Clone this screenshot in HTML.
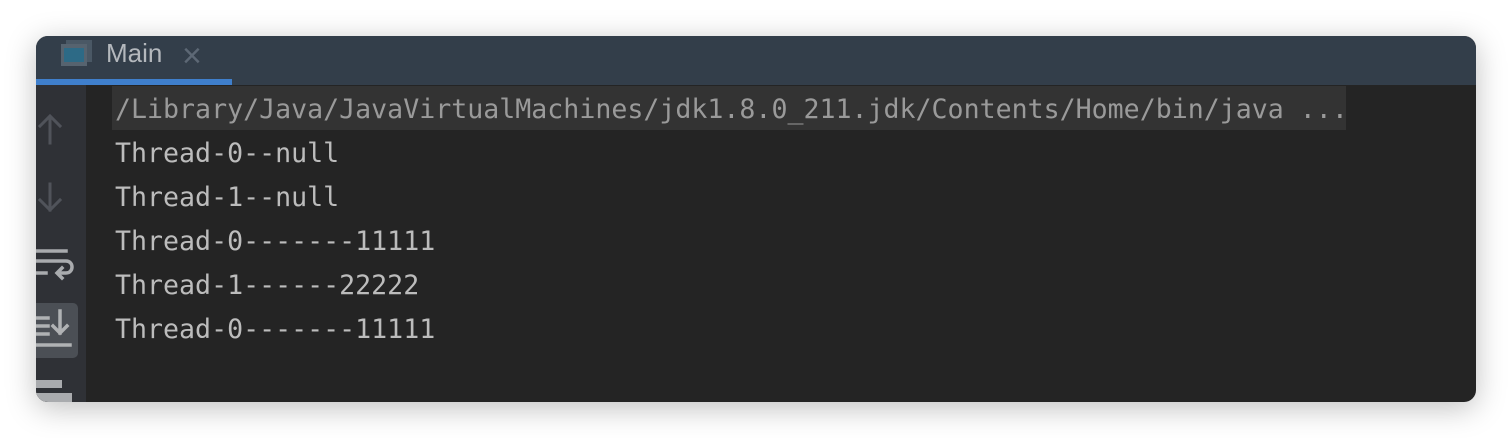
<!DOCTYPE html>
<html><head><meta charset="utf-8"><style>
html,body{margin:0;padding:0;background:#fff;width:1512px;height:438px;overflow:hidden}
.win{position:absolute;left:36px;top:36px;width:1440px;height:366px;border-radius:12px;overflow:hidden;background:#242424;box-shadow:0 6px 30px rgba(0,0,0,0.25)}
.hdr{position:absolute;left:0;top:0;width:1440px;height:49px;background:#333e4a}
.ul{position:absolute;left:0;top:43px;width:196px;height:6px;background:#3f7fcc}
.tab{position:absolute;left:70px;top:2px;height:36px;line-height:34px;font:26px "Liberation Sans",sans-serif;color:#b4b8bd}
.x{position:absolute;left:146px;top:1px;height:36px;line-height:32px;font:34px "Liberation Sans",sans-serif;color:#5d6875}
.side{position:absolute;left:0;top:49px;width:50px;height:317px;background:#2f3136}
.out{position:absolute;left:79px;top:52px;font:26.6px/44px "DejaVu Sans Mono",monospace;color:#bcbcbc;white-space:pre}
.hl{position:absolute;left:76px;top:50px;width:1234px;height:44px;background:#333333}
</style></head><body>
<div class="win">
<div class="hdr"></div>
<div class="ul"></div>
<svg style="position:absolute;left:22px;top:2px" width="36" height="30"><rect x="8" y="2" width="26" height="22" fill="#4a5865"/><rect x="3" y="6" width="26" height="22" fill="#56636f"/><rect x="6" y="10" width="20" height="14" fill="#2d6a86"/></svg>
<div class="tab">Main</div>
<div class="x">×</div>
<div class="side"></div>
<svg style="position:absolute;left:0;top:60px" width="50" height="310" fill="none" stroke-linecap="square">
<g stroke="#50535a" stroke-width="3"><path d="M14 21v26M4 30l10-10 10 10"/><path d="M14 88v26M4 104l10 10 10-10"/></g>
<g stroke="#a9abae" stroke-width="3.5"><path d="M0 155h30M0 165h30c4 0 6 3 6 6s-2 6-6 6h-8M26 172l-5 5 5 5M0 177h10"/></g>
<rect x="-10" y="207" width="52" height="55" rx="5" fill="#4b4f55"/>
<g stroke="#b0b2b4" stroke-width="3.5"><path d="M0 222h12M0 230h12M0 238h12M0 249h34M24 215v22M17 230l7 7 7-7"/></g>
<rect x="0" y="284" width="26" height="8" fill="#a9abae"/><rect x="0" y="297" width="36" height="10" fill="#a9abae"/>
</svg>
<div class="hl"></div>
<div class="out"><span style="color:#9a9a9a">/Library/Java/JavaVirtualMachines/jdk1.8.0_211.jdk/Contents/Home/bin/java ...</span>
Thread-0--null
Thread-1--null
Thread-0-------11111
Thread-1------22222
Thread-0-------11111</div>
</div>
</body></html>
